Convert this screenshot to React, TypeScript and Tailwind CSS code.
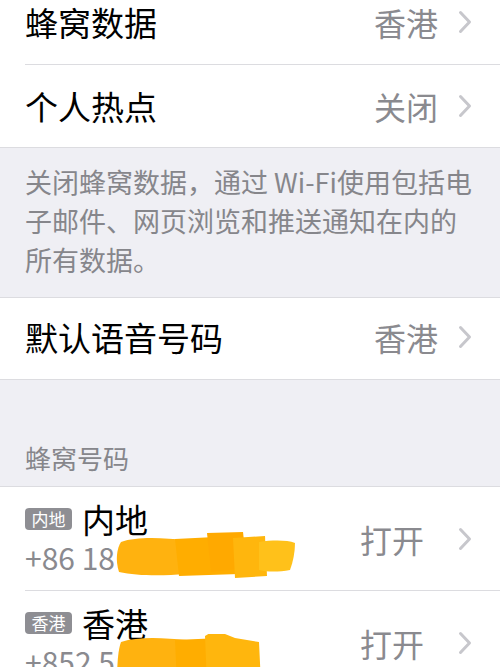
import React from 'react';

const FONT = { fontFamily: '"Noto Sans CJK SC", "Noto Sans", sans-serif' };

function Chevron() {
  return (
    <svg width="14" height="24" viewBox="0 0 14 24" className="shrink-0">
      <path d="M2.5 2.5 L11.5 12 L2.5 21.5" fill="none" stroke="#c7c7cc" strokeWidth="3" strokeLinecap="round" strokeLinejoin="round" />
    </svg>
  );
}

function Row({ label, value, className = '' }: { label: string; value: string; className?: string }) {
  return (
    <div className={`flex items-center bg-white pl-[25px] pr-[28px] ${className}`}>
      <span className="flex-1 text-[33px] leading-[40px] text-black">{label}</span>
      <span className="mr-[20px] text-[32px] leading-[40px] text-[#8a8a8f]">{value}</span>
      <Chevron />
    </div>
  );
}

// orange marker scribble over a phone number
function Scribble({ width, variant }: { width: number; variant: 0 | 1 }) {
  if (variant === 0) {
    return (
      <svg width={width} height="50" viewBox="0 0 182 50">
        <path d="M6 12 C22 6 50 8 70 10 L70 44 C48 46 22 46 4 42 C0 30 2 18 6 12 Z" fill="#ffb20f" />
        <path d="M60 9 L120 6 L124 44 L64 46 Z" fill="#ffad00" />
        <path d="M92 3 L128 2 L132 38 L96 42 Z" fill="#ffa900" />
        <path d="M118 8 L150 6 L152 46 L120 48 Z" fill="#ffb60d" />
        <path d="M144 12 C158 10 172 10 180 13 C180 22 178 32 175 40 C164 42 152 42 144 40 Z" fill="#ffc11a" />
      </svg>
    );
  }
  return (
    <svg width={width} height="50" viewBox="0 0 147 50">
      <path d="M6 8 C24 2 50 4 72 6 L74 50 L2 50 C2 30 3 16 6 8 Z" fill="#ffb20f" />
      <path d="M60 6 L106 4 L108 50 L62 50 Z" fill="#ffad00" />
      <path d="M90 2 L100 -4 L120 4 L144 8 L146 50 L92 50 Z" fill="#ffb60d" />
    </svg>
  );
}

function NumberRow({
  badge,
  title,
  number,
  scribbleWidth,
  variant,
  className = '',
}: {
  badge: string;
  title: string;
  number: string;
  scribbleWidth: number;
  variant: 0 | 1;
  className?: string;
}) {
  return (
    <div className={`relative flex items-center bg-white pl-[25px] pr-[28px] ${className}`}>
      <div className="flex-1 pt-[13px] pb-[12px]">
        <div className="flex items-center gap-[10px]">
          <span className="w-[47px] rounded-[4px] bg-[#8e8e93] text-center text-[17px] leading-[22px] text-white">{badge}</span>
          <span className="text-[33px] leading-[36px] text-black">{title}</span>
        </div>
        <div className="text-[30px] leading-[40px] text-[#8a8a8f]">{number}</div>
      </div>
      <span className="mr-[34px] text-[32px] leading-[40px] text-[#8a8a8f]">打开</span>
      <Chevron />
      <div className="absolute left-[115px] top-[43px]">
        <Scribble width={scribbleWidth} variant={variant} />
      </div>
    </div>
  );
}

export default function App() {
  return (
    <div className="h-[667px] w-[500px] overflow-hidden bg-[#efeff4]" style={FONT}>
      {/* top group (scrolled past its top) */}
      <div className="bg-white">
        <Row label="蜂窝数据" value="香港" className="h-[64px] pb-[20px]" />
        <div className="ml-[25px] h-px bg-[#dcdce0]" />
        <Row label="个人热点" value="关闭" className="h-[82px]" />
      </div>
      <div className="h-px bg-[#dcdce0]" />

      <p className="px-[25px] pt-[14px] pb-[18px] text-[27px] leading-[39px] text-[#86868b]">
        关闭蜂窝数据，通过 Wi-Fi使用包括电子邮件、网页浏览和推送通知在内的所有数据。
      </p>

      <div className="h-px bg-[#dcdce0]" />
      <Row label="默认语音号码" value="香港" className="h-[81px] pb-[3px]" />
      <div className="h-px bg-[#dcdce0]" />

      <div className="px-[25px] pt-[61px] pb-[12px] text-[26px] leading-[33px] text-[#86868b]">蜂窝号码</div>

      <div className="h-px bg-[#dcdce0]" />
      <NumberRow badge="内地" title="内地" number="+86 18" scribbleWidth={182} variant={0} className="h-[103px]" />
      <div className="h-px bg-white">
        <div className="ml-[25px] h-px bg-[#dcdce0]" />
      </div>
      <NumberRow badge="香港" title="香港" number="+852 5" scribbleWidth={147} variant={1} className="h-[103px]" />
    </div>
  );
}
